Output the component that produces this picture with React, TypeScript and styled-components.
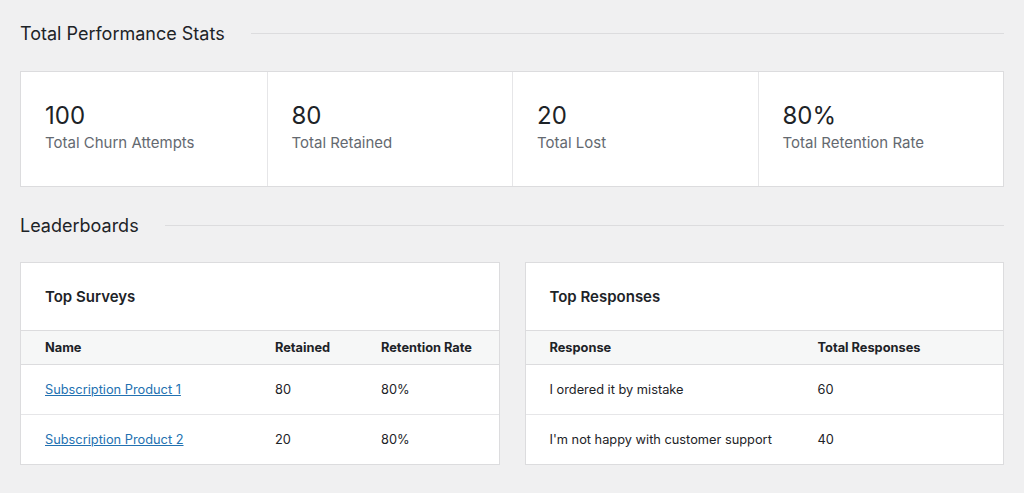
import styled, { createGlobalStyle } from "styled-components";

const GlobalStyle = createGlobalStyle`
    body {
        margin: 0;
        background: #f0f0f1;
        font-family: Inter, "Noto Sans", sans-serif;
        color: #1d2327;
    }
`;

const surveys = [
    { name: "Subscription Product 1", retained: 80, rate: "80%" },
    { name: "Subscription Product 2", retained: 20, rate: "80%" },
];

const responses = [
    { response: "I ordered it by mistake", total: 60 },
    { response: "I'm not happy with customer support", total: 40 },
];

const stats = [
    { value: "100", label: "Total Churn Attempts" },
    { value: "80", label: "Total Retained" },
    { value: "20", label: "Total Lost" },
    { value: "80%", label: "Total Retention Rate" },
];

const App = () => {
    return (
        <Page>
            <GlobalStyle />
            <SectionHeading>
                <h2>Total Performance Stats</h2>
                <span />
            </SectionHeading>
            <StatsCard>
                {stats.map((s) => (
                    <StatCell key={s.label}>
                        <StatValue>{s.value}</StatValue>
                        <StatLabel>{s.label}</StatLabel>
                    </StatCell>
                ))}
            </StatsCard>

            <SectionHeading>
                <h2>Leaderboards</h2>
                <span />
            </SectionHeading>
            <Boards>
                <BoardCard>
                    <BoardTitle>Top Surveys</BoardTitle>
                    <HeadRow $cols="230px 106px 1fr">
                        <div>Name</div>
                        <div>Retained</div>
                        <div>Retention Rate</div>
                    </HeadRow>
                    {surveys.map((s) => (
                        <BodyRow key={s.name} $cols="230px 106px 1fr">
                            <div><a href="#">{s.name}</a></div>
                            <div>{s.retained}</div>
                            <div>{s.rate}</div>
                        </BodyRow>
                    ))}
                </BoardCard>
                <BoardCard>
                    <BoardTitle>Top Responses</BoardTitle>
                    <HeadRow $cols="268px 1fr">
                        <div>Response</div>
                        <div>Total Responses</div>
                    </HeadRow>
                    {responses.map((r) => (
                        <BodyRow key={r.response} $cols="268px 1fr">
                            <div>{r.response}</div>
                            <div>{r.total}</div>
                        </BodyRow>
                    ))}
                </BoardCard>
            </Boards>
        </Page>
    );
};

export default App;

const Page = styled.main`
    padding: 20px 20px 28px;
`;

const SectionHeading = styled.div`
    display: flex;
    align-items: center;
    gap: 26px;
    height: 26px;

    h2 {
        margin: 0;
        font-size: 18px;
        font-weight: 400;
        color: #1d2327;
        white-space: nowrap;
    }

    span {
        flex: 1;
        height: 1px;
        background: #dcdcde;
    }
`;

const StatsCard = styled.section`
    display: grid;
    grid-template-columns: repeat(4, 1fr);
    margin: 25px 0 25px;
    background: #fff;
    border: 1px solid #dcdcde;
`;

const StatCell = styled.div`
    padding: 29px 24px 33px;
    border-left: 1px solid #e6e6e8;

    &:first-child {
        border-left: none;
    }
`;

const StatValue = styled.div`
    font-size: 24px;
    line-height: 30px;
    color: #1d2327;
`;

const StatLabel = styled.div`
    margin-top: 2px;
    font-size: 15px;
    line-height: 20px;
    color: #646970;
`;

const Boards = styled.section`
    display: grid;
    grid-template-columns: 1fr 1fr;
    gap: 25px;
    margin-top: 24px;
`;

const BoardCard = styled.div`
    background: #fff;
    border: 1px solid #dcdcde;
`;

const BoardTitle = styled.h3`
    margin: 0;
    height: 67px;
    display: flex;
    align-items: center;
    padding: 0 24px;
    font-size: 15px;
    font-weight: 600;
    color: #1d2327;
`;

const Row = styled.div<{ $cols: string }>`
    display: grid;
    grid-template-columns: ${(p) => p.$cols};
    align-items: center;
    padding: 0 24px;
    font-size: 12.8px;
`;

const HeadRow = styled(Row)`
    height: 33px;
    background: #f6f7f7;
    border-top: 1px solid #dcdcde;
    border-bottom: 1px solid #dcdcde;
    font-weight: 700;
`;

const BodyRow = styled(Row)`
    height: 49px;
    border-bottom: 1px solid #e6e6e8;

    &:last-child {
        border-bottom: none;
    }

    a {
        color: #2271b1;
        text-decoration: underline;
    }
`;
